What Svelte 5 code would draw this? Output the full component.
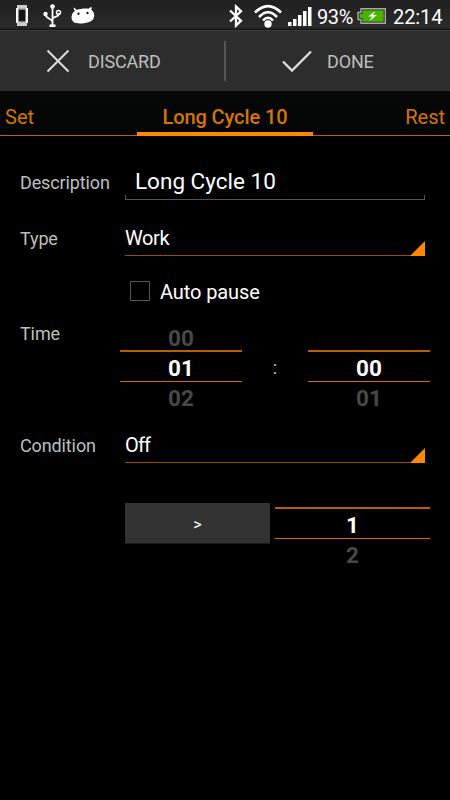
<script>
  let description = $state('Long Cycle 10');
  let autoPause = $state(false);
  const minutes = ['00', '01', '02'];
  const seconds = ['', '00', '01'];
  const limit = ['', '1', '2'];
</script>

{#snippet picker(values, width)}
  <div class="picker" style="width: {width}px">
    <div class="dim above">{values[0]}</div>
    <div class="current">{values[1]}</div>
    <div class="dim below">{values[2]}</div>
  </div>
{/snippet}

{#snippet spinner(value, spacing)}
  <div class="spinner">
    <span style="letter-spacing: {spacing}px">{value}</span>
    <svg width="15" height="15" viewBox="0 0 15 15"><path d="M15 0V15H0Z" fill="#ff8800" /></svg>
  </div>
{/snippet}

<div class="screen">
  <header class="status">
    <svg class="phone" width="12" height="21" viewBox="0 0 12 21">
      <path d="M1 0h10v3.500H1zM1 17.500h10V21H1z" fill="#ccc" /><path d="M1 3v15M11 3v15" stroke="#fff" stroke-width="2" />
      <rect x="2" y="4" width="8" height="13" fill="#151515" stroke="#eee" stroke-width="1" />
    </svg>
    <svg class="usb" width="19" height="23" viewBox="0 0 19 23" fill="none" stroke="#fff" stroke-width="1.800">
      <path d="M9.500 3v18M9.500 18C9 14.500 3 15 2.500 10.500M9.500 15c1-3 6.500-1 6.500-6" />
      <circle cx="9.500" cy="2.500" r="2.300" fill="#fff" stroke="none" /><circle cx="2.500" cy="10" r="2.200" fill="#fff" stroke="none" />
      <circle cx="15.500" cy="8.500" r="2" stroke-width="1.500" /><path d="M6.500 21.700h6" stroke-width="2.500" />
    </svg>
    <svg class="droid" width="24" height="17" viewBox="0 0 24 17">
      <path d="M2.800 1.800C2.500 1 3.500.5 4 1.200L5.800 3C9 1.700 14 1.200 17.500 1.700L19.500.2C20.200-.3 21 .5 20.700 1.200L20.300 2.800C23.500 5 24 9.500 22 12.500 19 16.500 5 18 2 14.500-.500 11.500.300 6.500 3.800 4Z" fill="#fff" />
      <circle cx="7.500" cy="6.800" r="1.200" fill="#222" /><circle cx="16.500" cy="6" r="1.200" fill="#222" />
    </svg>
    <svg class="bluetooth" width="14" height="24" viewBox="0 0 14 24" fill="none" stroke="#fff" stroke-width="2.300">
      <path d="M1 6.500 12 16.700 7 21.500V2.500l5 4.800L1 17.500" />
    </svg>
    <svg class="wifi" width="28" height="24" viewBox="0 0 28 24" fill="none" stroke="#fff" stroke-width="2.600">
      <path d="M1 8.500Q14-4.500 27 8.500M5 13Q14 3.500 23 13M9 16.500Q14 11 19 16.500" /><circle cx="14" cy="20" r="3.700" fill="#fff" stroke="none" />
    </svg>
    <svg class="signal" width="24" height="19" viewBox="0 0 24 19" fill="#fff">
      <path d="M0 15h3.500v4H0zM5 12h3.500v7H5zM10 8h3.500v11H10zM15 4h3.500v15H15zM20 0h3.500v19H20z" />
    </svg>
    <span class="percent">93%</span>
    <svg class="battery" width="29" height="16" viewBox="0 0 29 16">
      <path d="M4 .7H28.300V15.300H4V11.500H1V4.500H4Z" fill="#222" stroke="#aaa" stroke-width="1.400" />
      <path d="M5.500 2.300H26.700V13.700H5.500V10H2.500V6H5.500Z" fill="#48b400" />
      <path d="M18.500 3 11 8.500h4L12.500 13 20 7h-4Z" fill="#fff" />
    </svg>
    <span class="clock">22:14</span>
  </header>

  <nav class="actions">
    <button class="discard">
      <svg width="24" height="24" viewBox="0 0 24 24" fill="none" stroke="#ddd" stroke-width="2"><path d="M1.500 1.500 22.500 22.500M22.500 1.500 1.500 22.500" /></svg>
      <span>DISCARD</span>
    </button>
    <button class="done">
      <svg width="30" height="23" viewBox="0 0 30 23" fill="none" stroke="#ddd" stroke-width="2.300"><path d="M1 11.500 10 20.500 29 1.500" /></svg>
      <span>DONE</span>
    </button>
  </nav>

  <div class="tabs">
    <span class="prev">Set</span>
    <span class="active">Long Cycle 10</span>
    <span class="next">Rest</span>
  </div>

  <main>
    <div class="row description">
      <label for="description">Description</label>
      <div class="field"><input id="description" bind:value={description} /></div>
    </div>
    <div class="row type">
      <span class="label">Type</span>
      {@render spinner('Work', -0.4)}
    </div>
    <div class="row auto">
      <input id="auto" type="checkbox" bind:checked={autoPause} />
      <label for="auto">Auto pause</label>
    </div>
    <div class="row time">
      <span class="label">Time</span>
      {@render picker(minutes, 122)}
      <span class="colon">:</span>
      {@render picker(seconds, 122)}
    </div>
    <div class="row condition">
      <span class="label">Condition</span>
      {@render spinner('Off', -0.8)}
    </div>
    <div class="row compare">
      <button>&gt;</button>
      {@render picker(limit, 155)}
    </div>
  </main>
</div>

<style>
  :global(body) { margin: 0; background: #000; }
  .screen { width: 450px; height: 800px; overflow: hidden; background: #000; color: #fff; font-family: Roboto, sans-serif; display: flex; flex-direction: column; }
  svg { display: block; flex: none; }
  button, input { font: inherit; color: inherit; box-sizing: border-box; border: 0; padding: 0; margin: 0; background: none; }
  span, label { white-space: nowrap; }

  .status { height: 31px; box-sizing: border-box; border-bottom: 1px solid #3b3b3b; background: linear-gradient(#202020, #2a2a2a 90%, #151515); display: flex; align-items: flex-start; font-size: 20px; line-height: 24px; }
  .phone { margin: 5px 0 0 16px; }
  .usb { margin: 4px 0 0 15px; }
  .droid { margin: 7px 0 0 9px; }
  .bluetooth { margin: 4px 0 0 134px; }
  .wifi { margin: 4px 0 0 11px; }
  .signal { margin: 7px 0 0 6px; }
  .percent { width: 37px; margin: 5px 0 0 5px; letter-spacing: -.4px; }
  .battery { margin: 8px 0 0 3px; }
  .clock { margin: 5px 0 0 7px; letter-spacing: -.1px; }

  .actions { height: 60px; background: #2d2d2d; display: flex; color: #bebebe; font-size: 18px; letter-spacing: -.15px; }
  .actions button { display: flex; align-items: center; height: 60px; letter-spacing: inherit; }
  .actions .discard { width: 224px; padding-left: 46px; gap: 18px; }
  .actions .done { position: relative; width: 226px; padding-left: 58px; gap: 15px; }
  .actions .done::before { content: ''; position: absolute; left: 0; top: 10px; width: 2px; height: 40px; background: #555; }

  .tabs { height: 45px; box-sizing: border-box; border-bottom: 1px solid #b86200; background: linear-gradient(#070808, #030404); color: #d87400; display: flex; justify-content: space-between; font-size: 20px; line-height: 24px; }
  .tabs span { padding-top: 14px; }
  .prev { width: 132px; padding-left: 5px; }
  .active { width: 176px; height: 45px; box-sizing: border-box; border-bottom: 4px solid #ff8800; text-align: center; font-weight: 500; letter-spacing: -.1px; }
  .next { width: 132px; padding-right: 5px; text-align: right; }

  .row { display: flex; align-items: flex-start; }
  .label, .description label { width: 105px; margin-left: 20px; flex: none; font-size: 18px; line-height: 24px; letter-spacing: -.12px; color: #bebebe; }
  .description { height: 75px; }
  .description label { margin-top: 35px; }
  .field { position: relative; width: 300px; height: 34px; margin-top: 30px; border-bottom: 1px solid #555; box-sizing: border-box; }
  .field::before { content: ''; position: absolute; left: 0; right: 0; bottom: 0; height: 4px; border: solid #555; border-width: 0 1px; }
  .field input { display: block; width: 100%; height: 30px; padding-left: 10px; font-size: 22.5px; outline: 0; }

  .type { height: 56px; }
  .type .label { margin-top: 16px; }
  .spinner { position: relative; width: 300px; height: 35px; margin-top: 10px; box-sizing: border-box; border-bottom: 1px solid #965000; font-size: 20px; line-height: 34px; }
  .spinner svg { position: absolute; right: 0; bottom: -1px; }

  .auto { height: 48px; }
  .auto input { appearance: none; width: 20px; height: 20px; margin: 14px 10px 0 130px; border: 1px solid #555; }
  .auto label { margin-top: 13px; font-size: 20px; line-height: 24px; letter-spacing: -.1px; }

  .time { height: 105px; }
  .time .label { width: 100px; margin-top: 7px; }
  .picker { flex: none; text-align: center; font-size: 22.500px; font-weight: 700; margin-top: 6px; }
  .picker div { height: 30px; box-sizing: border-box; }
  .picker .dim { color: #484848; line-height: 33px; }
  .picker .above { height: 29px; line-height: 34px; }
  .picker .current { height: 32px; border-top: 2px solid #b86000; border-bottom: 1px solid #cf6d00; line-height: 32px; }
  .colon { width: 66px; margin-top: 41px; font-size: 18px; line-height: 24px; color: #bebebe; text-align: center; }

  .condition { height: 83px; }
  .condition .label { margin-top: 14px; }
  .condition .spinner { margin-top: 8px; }
  .compare button { width: 145px; height: 41px; margin: 0 5px 0 125px; padding-top: 2px; background: #323232; border-bottom: 1px solid #1b1b1b; font-size: 16px; }
  .compare .picker { margin-top: 4px; }
  .compare .above { height: 0; }
</style>
